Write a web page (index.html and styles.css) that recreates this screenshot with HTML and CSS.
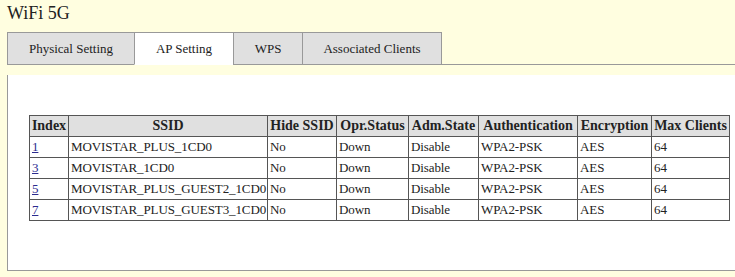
FILE: index.html
```html
<!DOCTYPE html>
<html lang="en">
<head>
  <meta charset="UTF-8">
  <title>WiFi 5G</title>
  <link rel="stylesheet" href="styles.css">
</head>
<body>

  <h1 class="title">WiFi 5G</h1>

  <ul class="tabs">
    <li class="tab tab-physical">Physical Setting</li>
    <li class="tab tab-ap active">AP Setting</li>
    <li class="tab tab-wps">WPS</li>
    <li class="tab tab-clients">Associated Clients</li>
  </ul>

  <div class="panel">
    <table class="ap-table">
      <colgroup>
        <col class="c-index">
        <col class="c-ssid">
        <col class="c-hide">
        <col class="c-opr">
        <col class="c-adm">
        <col class="c-auth">
        <col class="c-enc">
        <col class="c-max">
      </colgroup>
      <thead>
        <tr>
          <th>Index</th>
          <th>SSID</th>
          <th>Hide SSID</th>
          <th>Opr.Status</th>
          <th>Adm.State</th>
          <th>Authentication</th>
          <th>Encryption</th>
          <th>Max Clients</th>
        </tr>
      </thead>
      <tbody>
        <tr>
          <td><a href="#">1</a></td>
          <td>MOVISTAR_PLUS_1CD0</td>
          <td>No</td>
          <td>Down</td>
          <td>Disable</td>
          <td>WPA2-PSK</td>
          <td>AES</td>
          <td>64</td>
        </tr>
        <tr>
          <td><a href="#">3</a></td>
          <td>MOVISTAR_1CD0</td>
          <td>No</td>
          <td>Down</td>
          <td>Disable</td>
          <td>WPA2-PSK</td>
          <td>AES</td>
          <td>64</td>
        </tr>
        <tr>
          <td><a href="#">5</a></td>
          <td>MOVISTAR_PLUS_GUEST2_1CD0</td>
          <td>No</td>
          <td>Down</td>
          <td>Disable</td>
          <td>WPA2-PSK</td>
          <td>AES</td>
          <td>64</td>
        </tr>
        <tr>
          <td><a href="#">7</a></td>
          <td>MOVISTAR_PLUS_GUEST3_1CD0</td>
          <td>No</td>
          <td>Down</td>
          <td>Disable</td>
          <td>WPA2-PSK</td>
          <td>AES</td>
          <td>64</td>
        </tr>
      </tbody>
    </table>
  </div>

</body>
</html>
```

FILE: styles.css
```css
body {
  font-family: 'Liberation Serif', 'Times New Roman', serif;
  font-size: 13px;
  color: #222;
  background-color: #fffee0;
  margin: 0;
  padding: 0 0 0 7px;
}

.title {
  margin: 0;
  padding-top: 3px;
  height: 29px;
  font-size: 18px;
  font-weight: normal;
}

.tabs {
  display: flex;
  list-style: none;
  margin: 0;
  padding: 0;
  height: 32px;
  border-bottom: 1px solid #999;
}

.tab {
  box-sizing: border-box;
  height: 33px;
  line-height: 31px;
  background-color: #e0e0e0;
  border: 1px solid #999;
  border-right: none;
  text-align: center;
}

.tab-physical { width: 127px; }
.tab-ap { width: 99px; }
.tab-wps { width: 69px; }
.tab-clients { width: 140px; }

.tab:last-child {
  border-right: 1px solid #999;
}

.tab.active {
  background-color: #fff;
  border-bottom-color: #fff;
}

.panel {
  margin-top: 10px;
  height: 196px;
  background-color: #fff;
  border-left: 1px solid #999;
  border-bottom: 1px solid #999;
  padding: 40px 0 0 21px;
  box-sizing: border-box;
}

.ap-table {
  border-collapse: collapse;
  table-layout: fixed;
  width: 700px;
}

.c-index { width: 39px; }
.c-ssid { width: 199px; }
.c-hide { width: 69px; }
.c-opr { width: 72px; }
.c-adm { width: 70px; }
.c-auth { width: 99px; }
.c-enc { width: 74px; }
.c-max { width: 78px; }

.ap-table th,
.ap-table td {
  border: 1px solid #555;
  height: 20px;
  padding: 0 0 0 2px;
  text-align: left;
  white-space: nowrap;
  overflow: hidden;
}

.ap-table td {
  letter-spacing: -0.1px;
}

.ap-table th {
  background-color: #e0e0e0;
  text-align: center;
  font-size: 14px;
  padding: 0;
}

.ap-table a {
  color: #2b2b8f;
}
```
